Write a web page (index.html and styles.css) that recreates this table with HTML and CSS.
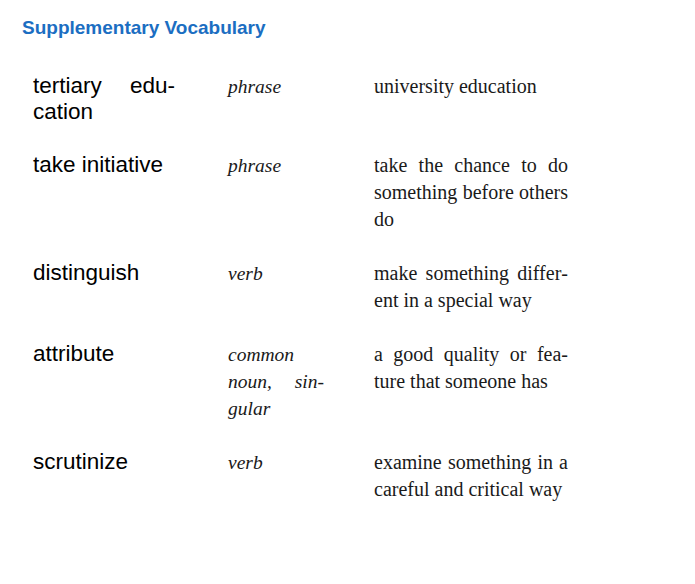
FILE: index.html
```html
<!DOCTYPE html>
<html lang="en">
<head>
<meta charset="utf-8">
<title>Supplementary Vocabulary</title>
<link rel="stylesheet" href="styles.css">
</head>
<body>
<main class="page">
  <h1 class="title">Supplementary Vocabulary</h1>
  <div class="vocab">
    <div class="row">
      <div class="term">tertiary edu&shy;cation</div>
      <div class="pos">phrase</div>
      <div class="def">university education</div>
    </div>
    <div class="row">
      <div class="term">take initiative</div>
      <div class="pos">phrase</div>
      <div class="def">take the chance to do something before others do</div>
    </div>
    <div class="row">
      <div class="term">distinguish</div>
      <div class="pos">verb</div>
      <div class="def">make something differ&shy;ent in a special way</div>
    </div>
    <div class="row">
      <div class="term">attribute</div>
      <div class="pos">common noun, sin&shy;gular</div>
      <div class="def">a good quality or fea&shy;ture that someone has</div>
    </div>
    <div class="row">
      <div class="term">scrutinize</div>
      <div class="pos">verb</div>
      <div class="def">examine something in a careful and critical way</div>
    </div>
  </div>
</main>
</body>
</html>
```

FILE: styles.css
```css
html, body {
  margin: 0;
  padding: 0;
  background: #ffffff;
}

.page {
  padding: 17px 0 0 22px;
}

.title {
  margin: 0;
  font-family: "Liberation Sans", Arial, sans-serif;
  font-weight: bold;
  font-size: 19px;
  line-height: 22px;
  color: #1b6ec2;
}

.vocab {
  display: flex;
  flex-direction: column;
  gap: 27px;
  margin-top: 34px;
  padding-left: 11px;
}

.row {
  display: flex;
  align-items: flex-start;
}

.term {
  width: 142px;
  flex: none;
  font-family: "Liberation Sans", Arial, sans-serif;
  font-size: 22.5px;
  line-height: 26px;
  color: #000;
  text-align: justify;
  hyphens: manual;
}

.pos {
  width: 96px;
  flex: none;
  margin-left: 53px;
  font-family: "Liberation Serif", "Times New Roman", serif;
  font-style: italic;
  font-size: 19.5px;
  line-height: 27px;
  color: #1a1a1a;
  text-align: justify;
  hyphens: manual;
}

.def {
  width: 194px;
  flex: none;
  margin-left: 50px;
  font-family: "Liberation Serif", "Times New Roman", serif;
  font-size: 20px;
  line-height: 27px;
  color: #1a1a1a;
  text-align: justify;
  hyphens: manual;
}
```
